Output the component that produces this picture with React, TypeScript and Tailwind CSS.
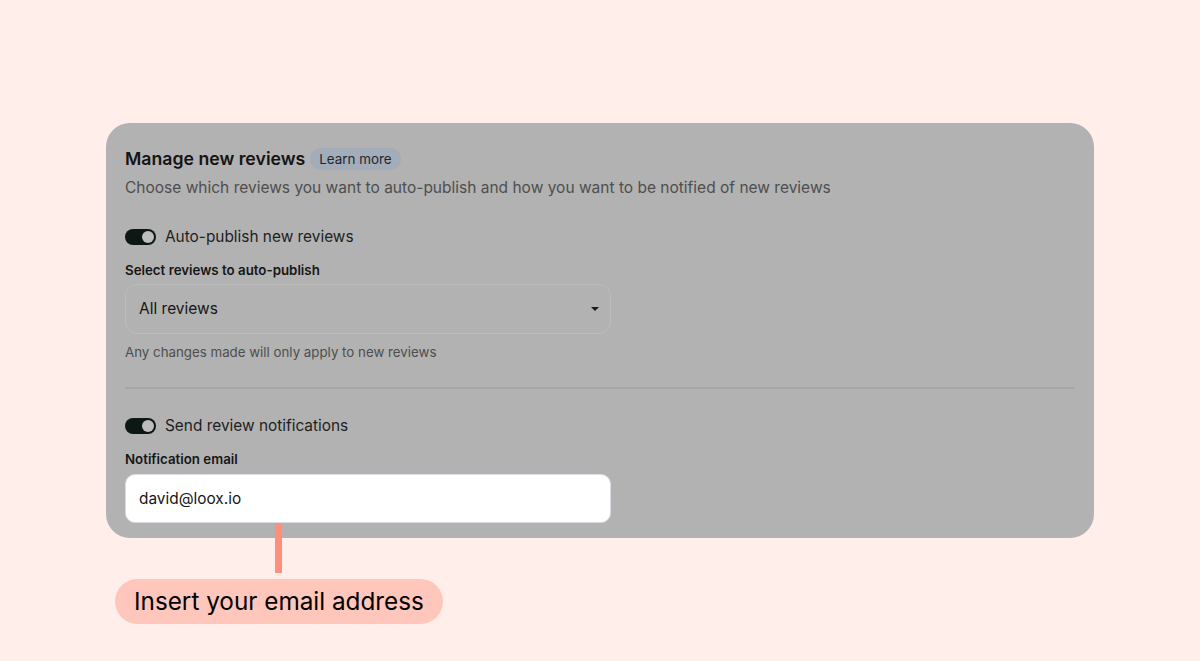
import React from 'react';

const Toggle: React.FC = () => (
  <span className="relative inline-flex h-4 w-[31px] shrink-0 items-center rounded-full bg-[#0c1813]">
    <span className="absolute right-[2px] h-3 w-3 rounded-full bg-[#bdbdbd]" />
  </span>
);

const App: React.FC = () => {
  return (
    <div
      className="min-h-[661px] w-full bg-[#ffeeea] pt-[123px]"
      style={{ fontFamily: 'Inter, "Noto Sans", sans-serif' }}
    >
      <div className="relative ml-[106px] w-[988px]">
        {/* Settings card */}
        <div className="rounded-[24px] bg-[#b2b2b2] pb-[15px] pl-[19px] pr-[20px] pt-[24px]">
          <div className="flex h-6 items-center gap-[5px]">
            <h2 className="text-[17.7px] font-semibold text-[#141414]">Manage new reviews</h2>
            <span className="flex h-[22px] items-center rounded-full bg-[#a3adb9] px-[9px] text-[13.4px] text-[#1f2630]">
              Learn more
            </span>
          </div>
          <p className="mt-[7px] text-[15.5px] leading-5 text-[#4e4e4e]">
            Choose which reviews you want to auto-publish and how you want to be notified of new reviews
          </p>

          <div className="mt-[29px] flex h-5 items-center gap-[9px]">
            <Toggle />
            <span className="text-[15.4px] text-[#1e1e1e]">Auto-publish new reviews</span>
          </div>
          <label className="mt-[14px] block text-[13.3px] font-semibold leading-[18px] text-[#161616]">
            Select reviews to auto-publish
          </label>
          <div className="mt-[5px] flex h-[50px] w-[486px] items-center justify-between rounded-[12px] border border-[#bdbdbd] pl-[13px] pr-[9px]">
            <span className="text-[15.5px] text-[#161616]">All reviews</span>
            <svg width="10" height="6" viewBox="0 0 10 6" className="mr-[1px]">
              <path d="M1 1h8L5 5z" fill="#1a1a1a" />
            </svg>
          </div>
          <p className="mt-[9px] text-[13.3px] leading-[18px] text-[#4e4e4e]">
            Any changes made will only apply to new reviews
          </p>

          <div className="mt-[26px] h-[2px] w-full bg-[#a6a6a6]" />

          <div className="mt-[27px] flex h-5 items-center gap-[9px]">
            <Toggle />
            <span className="text-[15.4px] text-[#1e1e1e]">Send review notifications</span>
          </div>
          <label className="mt-[14px] block text-[13.3px] font-semibold leading-[18px] text-[#161616]">
            Notification email
          </label>
          <div className="mt-[6px] flex h-[49px] w-[486px] items-center rounded-[10px] border border-[#d9dde3] bg-white pl-[13px]">
            <span className="text-[15.4px] text-[#161616]">david@loox.io</span>
          </div>
        </div>

        {/* Annotation */}
        <div className="absolute left-[169px] top-[400px] h-[50px] w-[7px] bg-[#ff8f7b]" />
        <div className="ml-[9px] mt-[41px] inline-flex h-[45px] items-center rounded-full bg-[#ffc6bb] px-[19px] text-[24.3px] text-black">
          Insert your email address
        </div>
      </div>
    </div>
  );
};

export default App;
